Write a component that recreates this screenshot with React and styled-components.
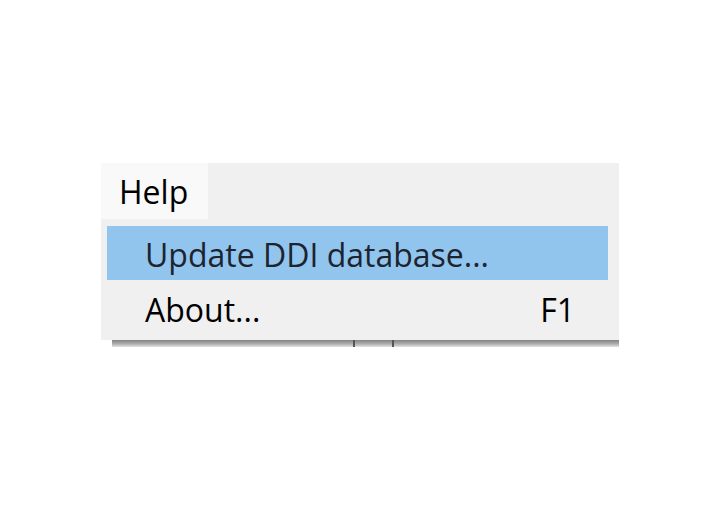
import React from "react";
import styled, { createGlobalStyle } from "styled-components";

const Global = createGlobalStyle`
  html, body { margin: 0; padding: 0; background: #ffffff; }
  body { font-family: "Open Sans", "Noto Sans", sans-serif; }
`;

const Page = styled.div`
  width: 720px;
  height: 512px;
  padding: 163px 0 0 101px;
  box-sizing: border-box;
`;

const Menu = styled.div`
  width: 518px;
  position: relative;
`;

const Bar = styled.div`
  display: flex;
  height: 56px;
  background: #f0f0f0;
`;

const Tab = styled.div`
  width: 107px;
  box-sizing: border-box;
  padding: 2px 0 0 18px;
  background: #f9f9f9;
  font-size: 32px;
  line-height: 54px;
  color: #000;
`;

const Dropdown = styled.div`
  background: #f0f0f0;
  padding: 7px 11px 5px 6px;
  display: flex;
  flex-direction: column;
  gap: 1px;
`;

const Item = styled.div`
  height: 54px;
  display: flex;
  align-items: center;
  justify-content: space-between;
  padding: 2px 33px 0 38px;
  box-sizing: border-box;
  background: ${(p) => (p.$active ? "#92c5ed" : "transparent")};
  font-size: 32px;
  color: ${(p) => (p.$active ? "#1c2430" : "#000")};
`;

const Shortcut = styled.span``;

const Shadow = styled.div`
  margin-left: 11px;
  height: 7px;
  background: linear-gradient(#858585, #a0a0a0 40%, #c8c8c8 80%, #e8e8e8);
  position: relative;
`;

const Tick = styled.div`
  position: absolute;
  top: 0;
  width: 2px;
  height: 7px;
  background: #555;
  left: ${(p) => p.$x}px;
`;

export default function App() {
  return (
    <>
      <Global />
      <Page>
        <Menu>
          <Bar>
            <Tab>Help</Tab>
          </Bar>
          <Dropdown>
            <Item $active>Update DDI database...</Item>
            <Item>
              About...
              <Shortcut>F1</Shortcut>
            </Item>
          </Dropdown>
          <Shadow>
            <Tick $x={241} />
            <Tick $x={280} />
          </Shadow>
        </Menu>
      </Page>
    </>
  );
}
